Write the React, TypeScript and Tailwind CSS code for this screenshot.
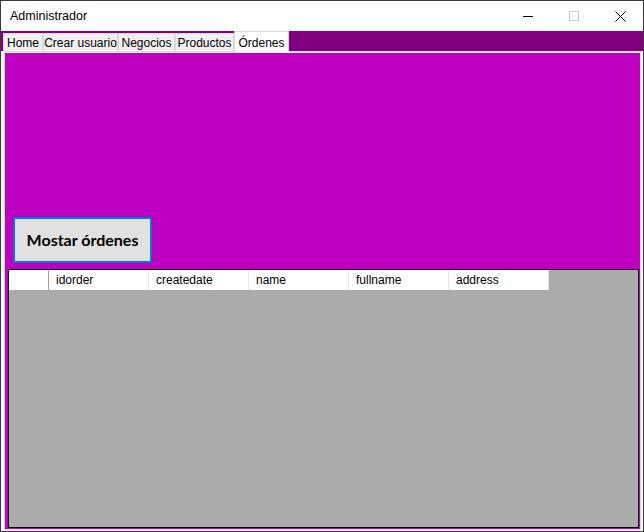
import React from "react";

const TABS = [
  { label: "Home", w: "w-[40px]" },
  { label: "Crear usuario", w: "w-[75px]" },
  { label: "Negocios", w: "w-[57px]" },
  { label: "Productos", w: "w-[59px]" },
];

const COLUMNS = ["idorder", "createdate", "name", "fullname", "address"];

const ui = { fontFamily: '"Liberation Sans", Arial, sans-serif' };

function TitleBar() {
  return (
    <div className="h-[30px] flex items-center justify-between bg-white shrink-0">
      <span className="pl-[9px] text-[12.5px] text-black whitespace-nowrap" style={ui}>
        Administrador
      </span>
      <div className="flex h-full">
        <div className="w-[46px] h-full flex items-center justify-center">
          <div className="w-[10px] h-px bg-black" />
        </div>
        <div className="w-[46px] h-full flex items-center justify-center">
          <div className="w-[10px] h-[10px] border border-[#c8c8c8]" />
        </div>
        <div className="w-[46px] h-full flex items-center justify-center">
          <svg width="11" height="11" viewBox="0 0 11 11">
            <path d="M0.5 0.5 L10.5 10.5 M10.5 0.5 L0.5 10.5" stroke="#000" strokeWidth="1" />
          </svg>
        </div>
      </div>
    </div>
  );
}

function TabStrip() {
  return (
    <div className="h-[20px] flex items-end pl-[2px] bg-[#800080] shrink-0">
      {TABS.map((t) => (
        <div
          key={t.label}
          className={`${t.w} h-[18px] flex items-center justify-center pt-px bg-[#f0f0f0] border border-b-0 border-[#d9d9d9] text-[12px] text-black whitespace-nowrap`}
          style={ui}
        >
          {t.label}
        </div>
      ))}
      <div
        className="w-[55px] h-[21px] -mb-px relative z-10 flex items-start pt-[2px] justify-center bg-white border border-b-0 border-[#d9d9d9] text-[12px] text-black whitespace-nowrap"
        style={ui}
      >
        Órdenes
      </div>
    </div>
  );
}

function Grid() {
  return (
    <div className="ml-[3px] mr-px mb-px h-[259px] border border-black bg-[#ababab] shrink-0">
      <div className="flex h-[20px] w-fit bg-white" style={ui}>
        <div className="w-[40px] h-full border-r border-[#a0a0a0]" />
        {COLUMNS.map((c) => (
          <div
            key={c}
            className="w-[100px] h-full flex items-center pl-[7px] border-r border-[#e3e3e3] text-[12px] text-black"
          >
            {c}
          </div>
        ))}
      </div>
    </div>
  );
}

export default function App() {
  return (
    <div className="w-[644px] h-[532px] border border-[#3b3b3b] flex flex-col bg-white overflow-hidden">
      <TitleBar />
      <div className="flex-1 flex flex-col bg-[#f4f4f4]">
        <TabStrip />
        <div className="flex-1 flex pl-[3px] pr-[2px] pb-px">
          <div className="flex-1 border border-[#d9d9d9] bg-white pt-px">
            <div className="h-full flex flex-col justify-end bg-[#c000c0]">
              <button
                className="ml-[8px] mb-[6px] w-[139px] h-[46px] border-2 border-[#0078d7] bg-[#e1e1e1] text-[16px] font-bold text-black whitespace-nowrap"
                style={{ fontFamily: '"Lato", "DejaVu Sans", sans-serif' }}
              >
                Mostar órdenes
              </button>
              <Grid />
            </div>
          </div>
        </div>
      </div>
    </div>
  );
}
